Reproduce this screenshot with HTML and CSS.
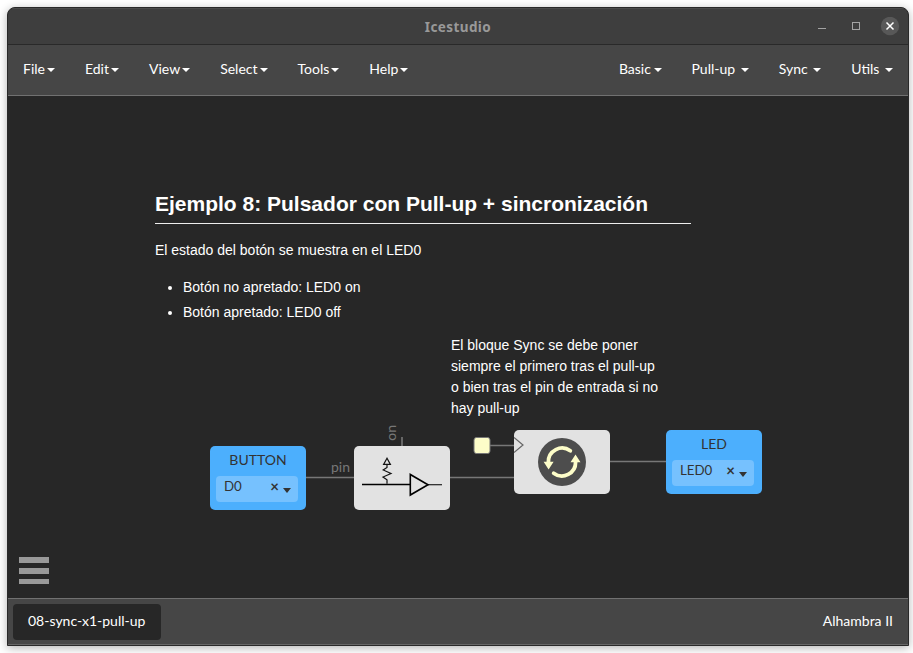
FILE: index.html
```html
<!DOCTYPE html>
<html lang="es">
<head>
<meta charset="utf-8">
<title>Icestudio</title>
<link rel="stylesheet" href="styles.css">
</head>
<body>
<div class="window">
  <header class="titlebar">
    <span class="title">Icestudio</span>
    <div class="controls">
      <svg width="90" height="20" viewBox="0 0 90 20">
        <path d="M7 11.5h8" stroke="#a3a3a3"/>
        <rect x="41.5" y="5.5" width="7" height="7" fill="none" stroke="#a3a3a3"/>
        <circle cx="79" cy="9" r="9.2" fill="#585858"/>
        <path d="M75.500 5.500l7 7m0-7l-7 7" stroke="#fff" stroke-width="1.5"/>
      </svg>
    </div>
  </header>
  <nav class="menubar">
    <div class="menus">
      <span class="menu">File<i class="caret"></i></span>
      <span class="menu">Edit<i class="caret"></i></span>
      <span class="menu">View<i class="caret"></i></span>
      <span class="menu">Select<i class="caret"></i></span>
      <span class="menu">Tools<i class="caret"></i></span>
      <span class="menu">Help<i class="caret"></i></span>
    </div>
    <div class="menus collections">
      <span class="menu">Basic<i class="caret near"></i></span>
      <span class="menu">Pull-up<i class="caret far"></i></span>
      <span class="menu">Sync<i class="caret far"></i></span>
      <span class="menu">Utils<i class="caret far"></i></span>
    </div>
  </nav>
  <main class="canvas">
    <svg class="wires" width="900" height="502" viewBox="8 96 900 502">
      <g fill="none" stroke="#777" stroke-width="1.6">
        <path d="M306 477.5h48M450 477.5h64M490 445.5h24M610 461.5h56M402 437v9"/>
      </g>
      <rect x="474" y="437.500" width="16" height="16" rx="2.500" fill="#fdfdc9" stroke="#777"/>
    </svg>
    <section class="note intro">
      <h1>Ejemplo 8: Pulsador con Pull-up + sincronización</h1>
      <p>El estado del botón se muestra en el LED0</p>
      <ul>
        <li>Botón no apretado: LED0 on</li>
        <li>Botón apretado: LED0 off</li>
      </ul>
    </section>
    <p class="note hint">El bloque Sync se debe poner<br>siempre el primero tras el pull-up<br>o bien tras el pin de entrada si no<br>hay pull-up</p>
    <div class="block io button">
      <span class="name">BUTTON</span>
      <div class="select"><span>D0</span><b class="clear">×</b><i class="arrow"></i></div>
    </div>
    <span class="port pin">pin</span>
    <span class="port on">on</span>
    <div class="block pullup">
      <svg width="96" height="64" viewBox="354 446 96 64" fill="none" stroke="#000">
        <path d="M362 484.500h48" stroke-width="1.600"/>
        <path d="M428 484.700h14" stroke-width="1.200" stroke="#222"/>
        <path d="M410.300 474.500v20.500l17.700-10.300z" stroke-width="1.600"/>
        <path d="M387 458.200l-3.400 6.200h6.800zM387 464.400v3l-3.800 2.600 7.800 3.500-8 3.500 4 2.800v4" stroke="#111" stroke-width="1.200"/>
      </svg>
    </div>
    <div class="block sync">
      <svg width="96" height="64" viewBox="514 430 96 64">
        <path d="M514 437.500l9 7.500-9 7.500" fill="none" stroke="#666" stroke-width="1.200"/>
        <circle cx="562" cy="462" r="24" fill="#4d4d4d"/>
        <g fill="none" stroke="#fdfdc9" stroke-width="3.800" stroke-linecap="round">
          <path d="M570.300 450.800A13.700 13.700 0 0 0 548.400 462"/>
          <path d="M553.700 473.200A13.700 13.700 0 0 0 575.600 462"/>
        </g>
        <path d="M543.600 461.800h10l-5 7.700zM570.500 462.200h10l-5-7.700z" fill="#fdfdc9"/>
      </svg>
    </div>
    <div class="block io led">
      <span class="name">LED</span>
      <div class="select"><span>LED0</span><b class="clear">×</b><i class="arrow"></i></div>
    </div>
    <div class="burger"><i></i><i></i><i></i></div>
  </main>
  <footer class="footer">
    <span class="tab">08-sync-x1-pull-up</span>
    <span class="board">Alhambra II</span>
  </footer>
</div>
</body>
</html>
```
FILE: styles.css
```css
* { box-sizing: border-box; }
body {
  margin: 0;
  height: 653px;
  padding: 7px 4px 7px 7px;
  overflow: hidden;
  background: #fff;
  font: 14px/20px Lato, sans-serif;
  color: #fff;
}
.window {
  height: 639px;
  display: flex;
  flex-direction: column;
  border: 1px solid #292929;
  border-radius: 8px 8px 0 0;
  overflow: hidden;
  background: #272727;
  box-shadow: 0 2px 10px rgba(0, 0, 0, .3);
}
.titlebar {
  flex: 0 0 37px;
  display: grid;
  grid-template-columns: 1fr auto 1fr;
  align-items: center;
  background: #3e3e3e;
  border-top: 1px solid #4b4b4b;
  border-bottom: 1px solid #292929;
}
.title {
  grid-column: 2;
  font: bold 13.500px/20px "Noto Sans", sans-serif;
  letter-spacing: .4px;
  color: #999;
}
.controls { justify-self: end; height: 20px; margin-right: 7px; }
.controls svg { display: block; }
.menubar {
  flex: 0 0 51px;
  display: flex;
  justify-content: space-between;
  align-items: center;
  padding: 0 15px 2px;
  background: #464646;
  border-bottom: 1px solid #717171;
}
.menus { display: flex; gap: 30px; }
.menu { display: flex; align-items: center; }
.caret {
  margin: 2px 0 0 2px;
  border: 4px solid transparent;
  border-top-color: #fff;
  border-bottom: 0;
}
.near { margin-left: 2.600px; }
.far { margin-left: 5.600px; }
.canvas { position: relative; flex: 1; background: #272727; }
.wires { position: absolute; left: 0; top: 0; }
.note {
  position: absolute;
  margin: 0;
  font: 14px/21px "Liberation Sans", sans-serif;
}
.intro { left: 147px; top: 91px; width: 536px; }
.intro h1 {
  margin: 0 0 16px;
  height: 37px;
  font-size: 21px;
  line-height: 34px;
  border-bottom: 1px solid #eee;
}
.intro p { margin: 0 0 16px; }
.intro ul { margin: 0; padding-left: 28px; }
.intro li { margin-bottom: 4px; }
.hint { left: 443px; top: 239px; white-space: nowrap; }
.block {
  position: absolute;
  width: 96px;
  height: 64px;
  border-radius: 5px;
  background: #e2e2e2;
}
.block svg { display: block; }
.io { padding: 4px 6px; background: #4caffd; color: #333; }
.name { display: block; text-align: center; }
.button { left: 202px; top: 350px; }
.pullup { left: 346px; top: 350px; }
.sync { left: 506px; top: 334px; }
.led { left: 658px; top: 334px; }
.select {
  display: flex;
  align-items: center;
  width: 82px;
  height: 26px;
  margin-top: 6px;
  padding: 0 7px 6px 8px;
  border-radius: 4px;
  background: #76c1fe;
  font-size: 13.300px;
}
.clear { margin-left: auto; font-size: 15px; }
.arrow {
  margin: 8px 0 0 4px;
  border: 4px solid transparent;
  border-top: 5px solid #333;
  border-bottom: 0;
}
.port { position: absolute; color: #777; }
.pin { left: 323px; top: 361px; }
.on { left: 373px; top: 329px; writing-mode: vertical-rl; transform: rotate(180deg); }
.burger {
  position: absolute;
  left: 11px;
  top: 461px;
  display: flex;
  flex-direction: column;
  gap: 5px;
}
.burger i { width: 30px; height: 6px; background: #999; }
.burger i:last-child { height: 5px; }
.footer {
  flex: 0 0 47px;
  display: flex;
  justify-content: space-between;
  align-items: center;
  padding: 0 15px 0 5px;
  background: #464646;
  border-top: 1px solid #717171;
  border-bottom: 1px solid #666;
}
.tab {
  padding: 7px 16px 9px 15px;
  border-radius: 4px;
  background: #272727;
}
.board { padding-bottom: 2px; }
```
